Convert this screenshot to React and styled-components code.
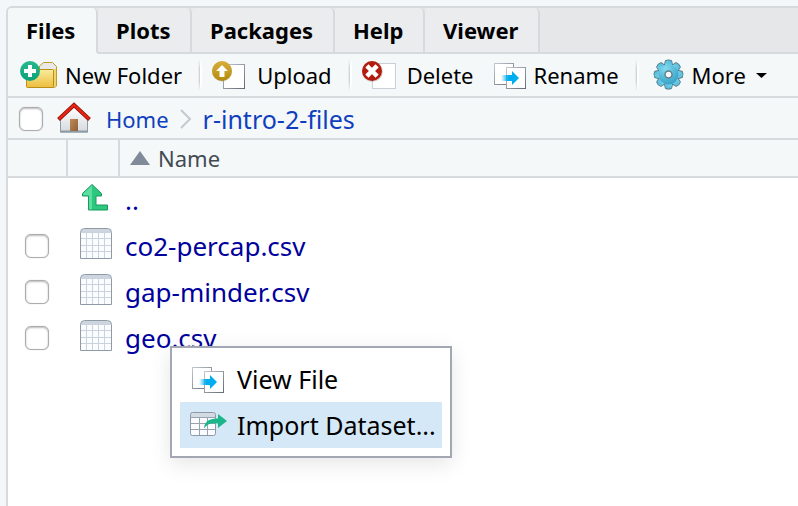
import React from "react";
import styled, { createGlobalStyle } from "styled-components";

const line = "#d6dadc";
const surface = "#f4f8f9";

const Global = createGlobalStyle`
  * { box-sizing: border-box; }
  body {
    margin: 0;
    background: #f4f7f9;
    font-family: "Noto Sans", "Open Sans", sans-serif;
    font-size: 22px;
    line-height: 30px;
    color: #000;
  }
`;

const Page = styled.div`
  min-height: 100vh;
  display: flex;
  flex-direction: column;
  padding: 6px 0 0 6px;
`;

const Panel = styled.main`
  flex: 1;
  display: flex;
  flex-direction: column;
  border: 2px solid ${line};
  border-right: 0;
  border-bottom: 0;
  border-top-left-radius: 6px;
  background: #fff;
`;

const Tabs = styled.div`
  display: flex;
  height: 46px;
  background: #e6e7e8;
  box-shadow: inset 0 -2px ${line};
  border-top-left-radius: 4px;
`;

const Tab = styled.button`
  border: 0;
  border-right: 2px solid ${line};
  border-bottom: 2px solid ${(p) => (p.$active ? surface : line)};
  border-radius: 4px 5px 0 0;
  background: ${(p) => (p.$active ? surface : "#ebecee")};
  color: #000;
  font: inherit;
  font-weight: 700;
  white-space: nowrap;
  text-align: left;
  padding: 0 0 0 18px;
  width: ${(p) => p.$w}px;
`;

const Toolbar = styled.div`
  display: flex;
  align-items: center;
  height: 44px;
  padding-left: 12px;
  background: ${surface};
  border-bottom: 2px solid ${line};
`;

const Tool = styled.button`
  display: flex;
  align-items: center;
  gap: 8px;
  flex: none;
  border: 0;
  background: none;
  padding: 0;
  margin-left: ${(p) => p.$before || 0}px;
  color: #000;
  font: inherit;
  white-space: nowrap;
`;

const Separator = styled.span`
  flex: none;
  width: 4px;
  height: 32px;
  margin: 0 10px 0 16px;
  background: linear-gradient(90deg, transparent, #c3c8ca 50%, #fff 50%);
  mask-image: linear-gradient(transparent, #000 30%, #000 70%, transparent);
`;

const Crumbs = styled.nav`
  display: flex;
  align-items: center;
  height: 42px;
  padding: 2px 0 0 11px;
  background: ${surface};
  border-bottom: 2px solid ${line};
`;

const Crumb = styled.a`
  color: #103fbe;
  font-size: ${(p) => p.$size}px;
  text-decoration: none;
  white-space: nowrap;
`;

const HomeLink = styled(Crumb)`
  display: flex;
  align-items: center;
  gap: 15px;
  margin: 0 10px 0 14px;
`;

const Check = styled.input`
  appearance: none;
  display: block;
  flex: none;
  width: 24px;
  height: 24px;
  margin: 0;
  border: 1px solid #adadad;
  border-radius: 6px;
  background: #fff;
  box-shadow: inset 0 1px 2px #bbb, 0 0 1px #bbb;
`;

const Files = styled.table`
  width: 100%;
  border-collapse: separate;
  border-spacing: 0;
  table-layout: fixed;
`;

const Head = styled.th`
  width: ${(p) => (p.$w ? `${p.$w}px` : "auto")};
  height: 38px;
  padding: 0 0 0 10px;
  background: ${surface};
  border-bottom: 2px solid ${line};
  border-right: ${(p) => (p.$w ? `2px solid ${line}` : "0")};
  color: #434b52;
  font-weight: 400;
  text-align: left;
`;

const Sort = styled.button`
  display: flex;
  align-items: center;
  gap: 8px;
  padding: 0;
  border: 0;
  background: none;
  color: inherit;
  font: inherit;
`;

const Cell = styled.td`
  position: relative;
  height: 46px;
  padding: 0 0 ${(p) => p.$lift || 2}px ${(p) => p.$pad}px;
  vertical-align: middle;
`;

const FileLink = styled.a`
  color: #00009c;
  font-size: 26px;
  text-decoration: none;
  white-space: nowrap;
`;

const Menu = styled.div`
  position: absolute;
  z-index: 1;
  left: 50px;
  top: 30px;
  width: 282px;
  padding: 8px;
  border: 2px solid #a3a7b4;
  background: #fff;
  box-shadow: 0 6px 20px rgba(0, 0, 0, 0.1);
`;

const MenuItem = styled.button`
  display: flex;
  align-items: center;
  gap: 10px;
  width: 100%;
  height: 46px;
  padding: 0 0 0 10px;
  border: 0;
  background: ${(p) => (p.$active ? "#d5e8f7" : "transparent")};
  color: #000;
  font: inherit;
  font-size: 25px;
  white-space: nowrap;
`;

const Icon = styled.svg`
  display: block;
  flex: none;
  overflow: visible;
`;

function NewFolderIcon() {
  return (
    <Icon width="37" height="28" viewBox="0 0 37 28">
      <defs>
        <linearGradient id="fold" x2="0" y2="1"><stop stopColor="#f8ec9d" /><stop offset="1" stopColor="#edbd3e" /></linearGradient>
        <linearGradient id="plus" x2="0" y2="1"><stop stopColor="#27b88e" /><stop offset="1" stopColor="#0da178" /></linearGradient>
      </defs>
      <path d="M19.500 8V5l4-3.500h9l4 4V25l-2 1.500h-9z" fill="#e9e9e7" stroke="#c29a26" />
      <path d="M33.500 8h2.500v17l-2.500 1z" fill="#eed36e" />
      <rect x="6.500" y="8.500" width="27" height="18" rx="1" fill="url(#fold)" stroke="#ba8d16" />
      <circle cx="10" cy="10" r="10" fill="url(#plus)" />
      <path d="M8 4h4v4h4v4h-4v4H8v-4H4V8h4z" fill="#fff" />
    </Icon>
  );
}

function UploadIcon() {
  return (
    <Icon width="37" height="28" viewBox="0 0 37 28">
      <defs>
        <linearGradient id="gold" x2="0" y2="1"><stop stopColor="#d8ae3b" /><stop offset="1" stopColor="#b58b0c" /></linearGradient>
        <linearGradient id="paper" x2="1" y2="1"><stop stopColor="#c4cad1" /><stop offset="1" stopColor="#636a75" /></linearGradient>
      </defs>
      <rect x="11.500" y="3.500" width="21" height="24" fill="#fff" stroke="url(#paper)" />
      <circle cx="10" cy="10.500" r="10" fill="#000" opacity=".15" />
      <circle cx="10" cy="10" r="10" fill="url(#gold)" />
      <path d="M10 4l6 6h-3.500v6h-5v-6H4z" fill="#fff" />
    </Icon>
  );
}

function DeleteIcon() {
  return (
    <Icon width="37" height="28" viewBox="0 0 37 28">
      <rect x="10.500" y="2.500" width="23" height="25" fill="#fff" stroke="#c9d1d7" />
      <circle cx="10.500" cy="10.500" r="10.500" fill="#000" opacity=".15" />
      <circle cx="10" cy="10" r="10" fill="#b21d10" />
      <path d="M6.500 6.500l7 7M13.500 6.500l-7 7" stroke="#fff" strokeWidth="4.500" strokeLinecap="square" />
    </Icon>
  );
}

function PagesIcon({ id, inset = 0 }) {
  const box = inset ? 37 : 32;
  return (
    <Icon width={box} height="28" viewBox={`${-inset} 0 ${box} 28`}>
      <defs>
        <linearGradient id={`${id}e`} x2="1" y2="1"><stop stopColor="#c2c8ce" /><stop offset="1" stopColor="#656c77" /></linearGradient>
        <linearGradient id={`${id}a`}><stop stopColor="#00aeef" stopOpacity="0" /><stop offset=".4" stopColor="#00aeef" /></linearGradient>
      </defs>
      <rect x=".500" y="2.500" width="19" height="21" fill="#fff" stroke={`url(#${id}e)`} />
      <rect x="12.500" y="6.500" width="19" height="21" fill="#fff" stroke={`url(#${id}e)`} />
      <path d="M7 14h11v-4l7 7-7 7v-4H7z" fill={`url(#${id}a)`} />
    </Icon>
  );
}

function GearIcon() {
  const teeth = [0, 45, 90, 135, 180, 225, 270, 315];
  const tooth = "M-4-8C-3.300-11-3.300-12-2.800-13.500Q0-15 2.800-13.500C3.300-12 3.300-11 4-8z";
  return (
    <Icon width="31" height="32" viewBox="-15.500 -15.500 31 32">
      <defs>
        <radialGradient id="gear" gradientUnits="userSpaceOnUse" cx="-3" cy="-6" r="20"><stop stopColor="#83dcf0" /><stop offset="1" stopColor="#2593bd" /></radialGradient>
      </defs>
      <g fill="#527886" stroke="#527886" strokeWidth="1.600">
        {teeth.map((a) => <path key={a} d={tooth} transform={`rotate(${a})`} />)}
        <circle r="10" />
      </g>
      <g fill="url(#gear)">
        {teeth.map((a) => <path key={a} d={tooth} transform={`rotate(${a})`} />)}
        <circle r="10" />
      </g>
      <circle r="3.500" fill="#f4f8f9" stroke="#62808c" strokeWidth="1.500" />
    </Icon>
  );
}

function HouseIcon() {
  return (
    <Icon width="34" height="32" viewBox="0 0 34 32">
      <defs>
        <linearGradient id="wall" x2="0" y2="1"><stop stopColor="#fff" /><stop offset="1" stopColor="#d6d9de" /></linearGradient>
        <linearGradient id="door" x2="1" y2="1"><stop stopColor="#c08a55" /><stop offset="1" stopColor="#8e6238" /></linearGradient>
      </defs>
      <path d="M3.500 16L17 4l13.500 12v13h-27z" fill="url(#wall)" stroke="#8f9ba5" />
      <path d="M3 28.500h28" stroke="#8f9ba5" strokeWidth="2" />
      <rect x="13" y="16" width="8" height="12" fill="url(#door)" />
      <path d="M1.500 16.500L17 2l15.500 14.500" fill="none" stroke="#8b1208" strokeWidth="4" />
      <path d="M2 16L17 2l15 14" fill="none" stroke="#e42310" strokeWidth="2.400" />
    </Icon>
  );
}

function UpIcon() {
  return (
    <Icon width="32" height="32" viewBox="0 0 32 32">
      <path d="M12 2.500l9.500 9v2.500H16v9h11.500v5H8V14H2.500v-2.500z" fill="#2bc87e" />
      <path d="M12 3v25H8.500V13.500H3v-2z" fill="#5ddda0" />
      <path d="M12 2.500l9.500 9v2.500H16v9h11.500v5H8.500V14H2.500v-2.500z" fill="none" stroke="#169b5d" strokeLinejoin="round" />
    </Icon>
  );
}

function SheetIcon() {
  return (
    <Icon width="32" height="32" viewBox="0 0 32 32">
      <path d="M.5 30.500V4.500q0-4 4-4h23q4 0 4 4v26z" fill="#fafcfe" />
      <path d="M1 4.500Q1 1 4.500 1h23Q31 1 31 4.500z" fill="#cdd5de" />
      <path d="M1 4.500h30M1 10.500h30M1 17.500h30M1 23.500h30M6.500 5v25M12.500 5v25M18.500 5v25M24.500 5v25" fill="none" stroke="#cbd3de" />
      <path d="M.5 30.500V4.500q0-4 4-4h23q4 0 4 4v26z" fill="none" stroke="#8e9ba7" />
    </Icon>
  );
}

function ImportIcon() {
  return (
    <Icon width="37" height="28" viewBox="0 0 37 28">
      <rect x=".500" y="1.500" width="25" height="23" rx="2" fill="#fafcff" />
      <path d="M1 2h24v4H1z" fill="#d3dae2" />
      <path d="M1 6.500h25M1 12.500h25M1 18.500h25M9.500 6v18M17.500 6v18" fill="none" stroke="#98a3af" />
      <rect x=".500" y="1.500" width="25" height="23" rx="2" fill="none" stroke="#8d99a6" />
      <path d="M14 17.500Q14.500 7 28 7.500V3l9 7-9 7v-4.500Q18 11 14 17.500z" fill="#1cb68b" />
    </Icon>
  );
}

const tabs = [["Files", 90], ["Plots", 94], ["Packages", 143], ["Help", 90], ["Viewer", 115]];
const files = ["co2-percap.csv", "gap-minder.csv", "geo.csv"];

function ContextMenu() {
  return (
    <Menu role="menu">
      <MenuItem role="menuitem"><PagesIcon id="view" inset={2} />View File</MenuItem>
      <MenuItem role="menuitem" $active><ImportIcon />Import Dataset...</MenuItem>
    </Menu>
  );
}

export default function App() {
  return (
    <>
      <Global />
      <Page>
        <Panel>
          <Tabs role="tablist">
            {tabs.map(([name, w], i) => (
              <Tab key={name} role="tab" aria-selected={i === 0} $active={i === 0} $w={w}>{name}</Tab>
            ))}
          </Tabs>
          <Toolbar>
            <Tool><NewFolderIcon />New Folder</Tool>
            <Separator />
            <Tool><UploadIcon />Upload</Tool>
            <Separator />
            <Tool><DeleteIcon />Delete</Tool>
            <Tool $before={20}><PagesIcon id="rename" />Rename</Tool>
            <Separator />
            <Tool $before={4}>
              <GearIcon />More
              <Icon width="14" height="6" viewBox="-2 0 14 6"><path d="M0 1h11L5.500 6z" fill="#000" /></Icon>
            </Tool>
          </Toolbar>
          <Crumbs aria-label="Path">
            <Check type="checkbox" aria-label="Select all files" />
            <HomeLink href="#home" $size={22}><HouseIcon />Home</HomeLink>
            <Icon width="24" height="20" viewBox="0 0 24 20">
              <path d="M2 1l9 9-9 9" fill="none" stroke="#c3c9d0" strokeWidth="2" />
            </Icon>
            <Crumb href="#r-intro-2-files" $size={25}>r-intro-2-files</Crumb>
          </Crumbs>
          <Files>
            <thead>
              <tr>
                <Head $w={60} aria-label="Select" />
                <Head $w={52} aria-label="Type" />
                <Head>
                  <Sort>
                    <Icon width="20" height="14" viewBox="0 0 20 14"><path d="M10 0l10 14H0z" fill="#808a98" /></Icon>
                    Name
                  </Sort>
                </Head>
              </tr>
            </thead>
            <tbody>
              <tr>
                <Cell $pad={17} />
                <Cell $pad={12} $lift={6}><UpIcon /></Cell>
                <Cell $pad={5}><FileLink href="#up">..</FileLink></Cell>
              </tr>
              {files.map((name) => (
                <tr key={name}>
                  <Cell $pad={17}><Check type="checkbox" aria-label={`Select ${name}`} /></Cell>
                  <Cell $pad={12} $lift={6}><SheetIcon /></Cell>
                  <Cell $pad={5}>
                    <FileLink href={`#${name}`}>{name}</FileLink>
                    {name === "geo.csv" && <ContextMenu />}
                  </Cell>
                </tr>
              ))}
            </tbody>
          </Files>
        </Panel>
      </Page>
    </>
  );
}
